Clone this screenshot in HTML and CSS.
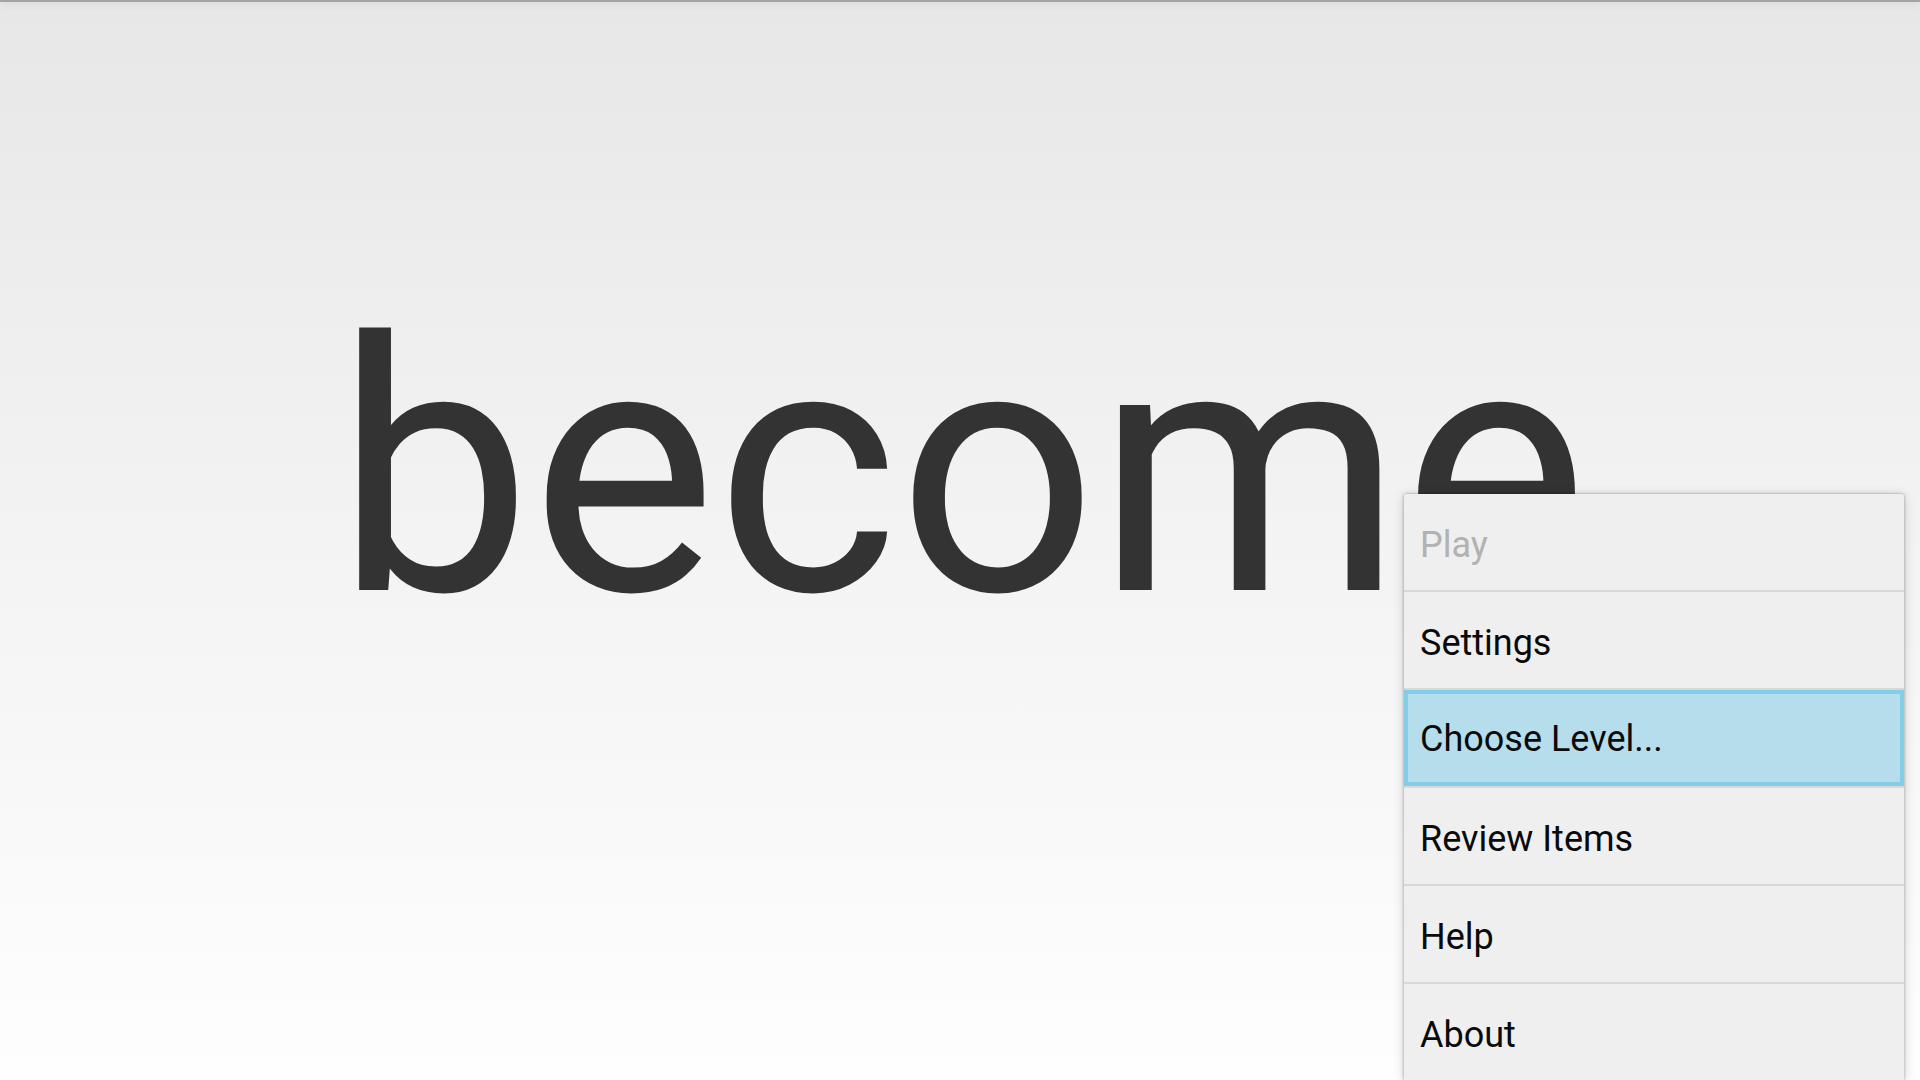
FILE: index.html
```html
<!DOCTYPE html>
<html>
<head>
<meta charset="utf-8">
<link rel="stylesheet" href="styles.css">
</head>
<body>
<div class="screen">
  <div class="topline"></div>
  <div class="word-area">
    <div class="word">become</div>
  </div>
  <div class="menu">
    <div class="item disabled">Play</div>
    <div class="divider"></div>
    <div class="item">Settings</div>
    <div class="divider"></div>
    <div class="item selected">Choose Level...</div>
    <div class="divider"></div>
    <div class="item">Review Items</div>
    <div class="divider"></div>
    <div class="item">Help</div>
    <div class="divider"></div>
    <div class="item">About</div>
  </div>
</div>
</body>
</html>
```
FILE: styles.css
```css
html, body {
  margin: 0;
  padding: 0;
  width: 1920px;
  height: 1080px;
  overflow: hidden;
}
body {
  font-family: Roboto, "Liberation Sans", sans-serif;
}
.screen {
  position: relative;
  width: 1920px;
  height: 1080px;
  background: linear-gradient(to bottom, #e7e7e7 0%, #f2f2f2 45%, #fefefe 100%);
  overflow: hidden;
}
.topline {
  position: absolute;
  left: 0;
  top: 0;
  width: 100%;
  height: 2px;
  background: #a4a4a4;
  box-shadow: 0 2px 6px rgba(0,0,0,0.12);
}
.word-area {
  display: flex;
  justify-content: center;
  padding-top: 258px;
}
.word {
  font-size: 350px;
  line-height: 424px;
  color: #333333;
  letter-spacing: -1px;
  padding-left: 2px;
}
.menu {
  position: absolute;
  left: 1404px;
  top: 494px;
  width: 500px;
  background: #efefef;
  border-radius: 2px 2px 0 0;
  box-shadow: 0 0 3px rgba(0,0,0,0.35), 0 2px 12px rgba(0,0,0,0.18);
  display: flex;
  flex-direction: column;
}
.item {
  height: 96px;
  display: flex;
  align-items: center;
  padding-left: 16px;
  padding-top: 5px;
  font-size: 36px;
  color: #0a0a0a;
  box-sizing: border-box;
}
.item.disabled {
  color: #b2b2b2;
}
.item.selected {
  background: #b5ddec;
  border: 4px solid #82cde8;
  padding-left: 12px;
  padding-top: 1px;
}
.divider {
  height: 2px;
  background: #d8d8d8;
}
```
